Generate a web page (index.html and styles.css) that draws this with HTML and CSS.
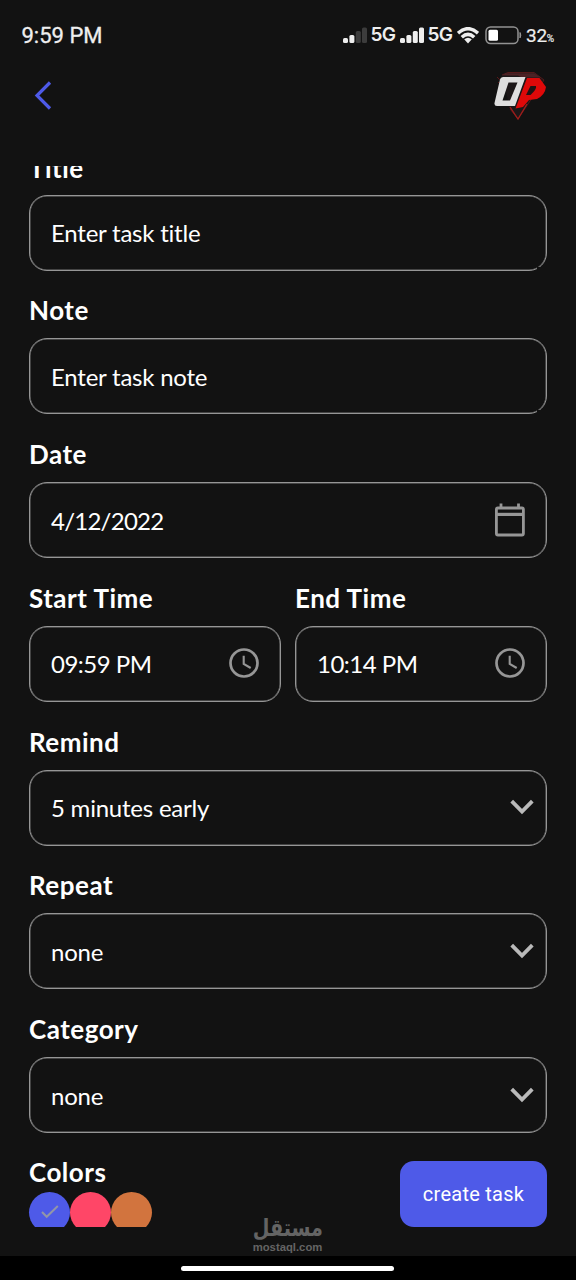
FILE: index.html
```html
<!DOCTYPE html>
<html lang="en">
<head>
<meta charset="utf-8">
<title>Create task</title>
<link rel="stylesheet" href="styles.css">
</head>
<body>
<div class="screen">
  <div class="status">
    <span class="clock">9:59 PM</span>
    <div class="indicators">
      <svg class="signal" width="24" height="17" viewBox="0 0 24 17"><rect x="0" y="11" width="5" height="5" rx="1.500" fill="#eee"/><rect x="6.400" y="8" width="5" height="8" rx="1.500" fill="#eee"/><rect x="12.800" y="4" width="5" height="12" rx="1.500" fill="#3c3c3c"/><rect x="19" y="0.500" width="5" height="15.500" rx="1.500" fill="#3c3c3c"/></svg>
      <span class="net">5G</span>
      <svg class="signal second" width="24" height="17" viewBox="0 0 24 17"><g fill="#eee"><rect x="0" y="11" width="5" height="5" rx="1.500"/><rect x="6.400" y="8" width="5" height="8" rx="1.500"/><rect x="12.800" y="4" width="5" height="12" rx="1.500"/><rect x="19" y="0.500" width="5" height="15.500" rx="1.500"/></g></svg>
      <span class="net">5G</span>
      <svg class="wifi" width="22" height="17" viewBox="0 0 22 17"><g fill="none" stroke="#eee" stroke-width="3.500"><path d="M1 6.200Q11-2.800 21 6.200"/><path d="M4.800 10.200Q11 4.600 17.200 10.200"/></g><path d="M7.200 12.300Q11 9.200 14.800 12.300L11 16.500Z" fill="#eee"/></svg>
      <svg class="battery" width="37" height="19" viewBox="0 0 37 19"><rect x="1" y="1" width="32" height="16.500" rx="4.500" fill="none" stroke="#929292" stroke-width="1.500"/><rect x="3.500" y="3.800" width="9.500" height="11" rx="1.500" fill="#fff"/><path d="M35 6.500q1.600 2.700 0 5.400z" fill="#999" stroke="#999"/></svg>
      <span class="percent">32<small>%</small></span>
    </div>
  </div>
  <header class="header">
    <svg width="20" height="32" viewBox="0 0 20 32"><path d="M17 3.500L4 16.500L17 29.500" fill="none" stroke="#4e5ae8" stroke-width="3.200"/></svg>
    <svg class="logo" width="56" height="52" viewBox="0 0 56 52">
      <path d="M8 4L14 1.500H40L50 9L24 48L16 38" fill="#1c1718" stroke="#54191a"/>
      <path d="M3 6L7 10M4 11L7 14" stroke="#5a1718" fill="none"/>
      <path d="M8 4.300L12 2.200H40L47 6.500H28L24 4.500Z" fill="#4c2225"/>
      <path d="M16 36L24 48L33 33" fill="none" stroke="#a01d1b" stroke-width="1.300"/>
      <path d="M33 7H45.500L52 16Q51 24 43 28L35 29L29 36L21.500 37.500Z" fill="#df0909"/>
      <path d="M36.500 15H42Q43 18 36.500 24H32Z" fill="#211415"/>
      <path fill-rule="evenodd" d="M9 6H31.500L21 35H3Q0 35 .5 32L6 8.500Q6.500 6 9 6ZM14.500 11.500L8.500 29.500H16L23.500 11.500Z" fill="#dedede"/>
    </svg>
  </header>
  <main class="scroll">
    <form class="form">
      <div class="field"><label class="label first">Title</label><div class="box notch">Enter task title</div></div>
      <div class="field"><label class="label">Note</label><div class="box notch">Enter task note</div></div>
      <div class="field"><label class="label">Date</label><div class="box"><span class="date">4/12/2022</span>
        <svg class="icon" width="32" height="36" viewBox="0 0 32 36"><rect x="2.400" y="6" width="27" height="27" rx="1.500" fill="none" stroke="#969696" stroke-width="2.800"/><path d="M2 12.400H30" stroke="#969696" stroke-width="3.200"/><path d="M7 1.500V6M24.500 1.500V6" stroke="#969696" stroke-width="2.800"/></svg></div></div>
      <div class="pair">
        <div class="field"><label class="label">Start Time</label><div class="box"><span class="time">09:59 PM</span>
          <svg class="icon" width="32" height="32" viewBox="0 0 32 32"><g fill="none" stroke="#969696"><circle cx="16" cy="16" r="13.500" stroke-width="2.700"/><path d="M15.700 8.800V16.800L22.700 21" stroke-width="2.100"/></g></svg></div></div>
        <div class="field"><label class="label">End Time</label><div class="box"><span class="time">10:14 PM</span>
          <svg class="icon" width="32" height="32" viewBox="0 0 32 32"><g fill="none" stroke="#969696"><circle cx="16" cy="16" r="13.500" stroke-width="2.700"/><path d="M15.700 8.800V16.800L22.700 21" stroke-width="2.100"/></g></svg></div></div>
      </div>
      <div class="field"><label class="label">Remind</label><div class="box">5 minutes early
        <svg class="arrow" width="26" height="18" viewBox="0 0 26 18"><path d="M2.700 3.200L13 13.500L23.300 3.200" fill="none" stroke="#bababa" stroke-width="3.800"/></svg></div></div>
      <div class="field"><label class="label">Repeat</label><div class="box">none
        <svg class="arrow" width="26" height="18" viewBox="0 0 26 18"><path d="M2.700 3.200L13 13.500L23.300 3.200" fill="none" stroke="#bababa" stroke-width="3.800"/></svg></div></div>
      <div class="field"><label class="label">Category</label><div class="box">none
        <svg class="arrow" width="26" height="18" viewBox="0 0 26 18"><path d="M2.700 3.200L13 13.500L23.300 3.200" fill="none" stroke="#bababa" stroke-width="3.800"/></svg></div></div>
      <div class="bottom">
        <div class="colors">
          <div class="label">Colors</div>
          <div class="swatches">
            <span class="swatch blue"><svg width="20" height="16" viewBox="0 0 20 16"><path d="M2 8L6.700 12.800L17.800 2" fill="none" stroke="#9296a8" stroke-width="2"/></svg></span>
            <span class="swatch pink"></span>
            <span class="swatch orange"></span>
          </div>
        </div>
        <button class="create" type="button">create task</button>
      </div>
    </form>
  </main>
  <footer class="nav"><span class="handle"></span></footer>
  <div class="watermark"><span class="ar" lang="ar" dir="rtl">مستقل</span><span class="site">mostaql.com</span></div>
</div>
</body>
</html>
```
FILE: styles.css
```css
* { box-sizing: border-box; }
body { margin: 0; background: #121212; }
svg { display: block; flex: none; }
.screen {
  position: relative;
  display: flex;
  flex-direction: column;
  width: 576px;
  height: 1280px;
  overflow: hidden;
  background: #121212;
  color: #fff;
  font-family: Lato, sans-serif;
  font-variant-ligatures: none;
}
.status {
  display: flex;
  justify-content: space-between;
  align-items: center;
  height: 70px;
  padding: 0 20px 0 21.5px;
  font-family: Roboto, sans-serif;
  color: #eee;
}
.clock { font-size: 22px; -webkit-text-stroke: .3px; }
.indicators { display: flex; align-items: center; height: 30px; }
.net { margin-left: 3.5px; width: 24.5px; font: 600 19px/24px Inter, sans-serif; letter-spacing: -.8px; }
.second { margin-left: 5px; }
.wifi { margin-left: 5px; }
.battery { margin-left: 6px; }
.percent { margin-left: 4px; width: 30px; font-size: 19px; letter-spacing: -.3px; white-space: nowrap; -webkit-text-stroke: .2px; }
.percent small { font-size: 10px; }
.header {
  display: flex;
  justify-content: space-between;
  align-items: flex-start;
  height: 96px;
  padding: 1px 26px 0 32.5px;
}
.header > svg:first-child { margin-top: 8px; }
.scroll { height: 1061px; overflow: hidden; padding: 0 29px; }
.form { margin-top: -39.1px; }
.label {
  display: block;
  font-size: 26px;
  font-weight: 700;
  line-height: 32px;
  letter-spacing: .5px;
}
.field { flex: 1; height: 143.75px; }
.field .label { padding: 23.8px 0 11.95px; }
.field .first { padding: 24.6px 0 11.15px; }
.box {
  position: relative;
  display: flex;
  justify-content: space-between;
  align-items: center;
  height: 76px;
  padding: .6px 20px .4px 21px;
  border: 1px solid #969696;
  box-shadow: inset 0 0 0 .5px #777;
  border-radius: 18px;
  font-size: 24px;
  letter-spacing: -.22px;
}
.date { letter-spacing: -.75px; }
.time { letter-spacing: -.5px; }
.notch::after {
  content: "";
  position: absolute;
  right: 5px;
  bottom: 1px;
  width: 4px;
  height: 2px;
  background: #121212;
}
.icon { margin-top: -1px; }
.arrow { margin: -1px -9px 0 0; }
.pair { display: flex; gap: 14px; }
.bottom { display: flex; justify-content: space-between; }
.colors { padding-top: 22.4px; }
.swatches { display: flex; margin-top: 4px; }
.swatch {
  display: flex;
  align-items: center;
  justify-content: center;
  width: 41px;
  height: 41px;
  border-radius: 50%;
}
.blue { background: #4e5ae8; }
.pink { background: #ff4667; }
.orange { background: #d2743e; }
.create {
  width: 147px;
  height: 66px;
  margin-top: 27.4px;
  padding: 0;
  border: 0;
  border-radius: 14px;
  background: #4e5ae8;
  color: #fff;
  font: 20px Roboto, sans-serif;
  letter-spacing: .25px;
}
.nav {
  display: flex;
  justify-content: center;
  height: 24px;
  margin-top: 29px;
  padding: 10px 1px 0 0;
  background: #000;
}
.handle { width: 213px; height: 5px; border-radius: 3px; background: #fff; }
.watermark {
  position: absolute;
  left: 247px;
  top: 1215px;
  width: 81px;
  display: flex;
  flex-direction: column;
  align-items: center;
  color: #646464;
}
.ar { font: 700 24px/26px "DejaVu Sans", sans-serif; transform: scaleX(.8); }
.site { font: 700 11.3px/13px "Liberation Sans", sans-serif; }
```
